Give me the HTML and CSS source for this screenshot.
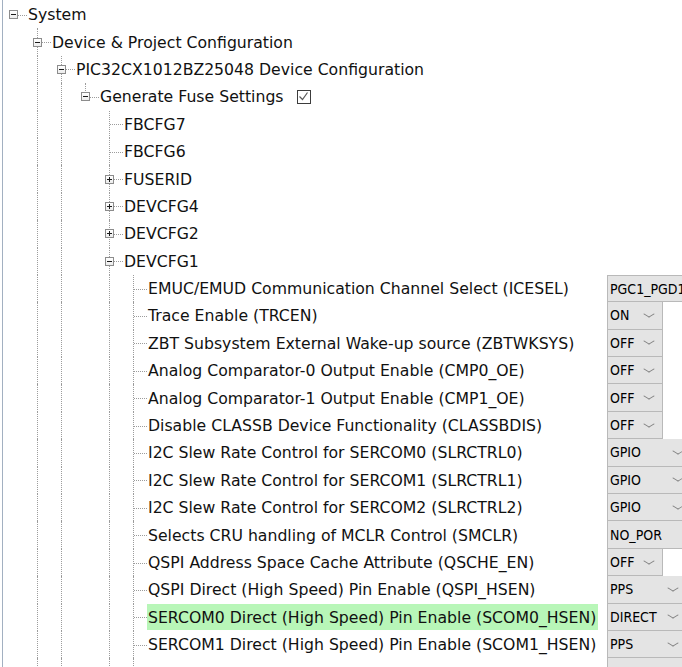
FILE: index.html
```html
<!DOCTYPE html>
<html>
<head>
<meta charset="utf-8">
<link rel="stylesheet" href="styles.css">
</head>
<body>
<div class="tree">
  <div class="row"><div class="node"><span class="cell r"><span class="exp minus"></span></span><span class="label">System</span></div><div class="val"></div></div>
  <div class="row"><div class="node"><span class="cell"></span><span class="cell t"><span class="exp minus"></span></span><span class="label">Device &amp; Project Configuration</span></div><div class="val"></div></div>
  <div class="row"><div class="node"><span class="cell"></span><span class="cell v"></span><span class="cell t"><span class="exp minus"></span></span><span class="label">PIC32CX1012BZ25048 Device Configuration</span></div><div class="val"></div></div>
  <div class="row"><div class="node"><span class="cell"></span><span class="cell v"></span><span class="cell v"></span><span class="cell l"><span class="exp minus"></span></span><span class="label">Generate Fuse Settings</span><span class="check"><svg width="11" height="11" viewBox="0 0 11 11"><polyline points="1.5,5.5 4.5,8.5 9.5,1.5" fill="none" stroke="#5a5a5a" stroke-width="1.2"/></svg></span></div><div class="val"></div></div>
  <div class="row"><div class="node"><span class="cell"></span><span class="cell v"></span><span class="cell v"></span><span class="cell"></span><span class="cell t"></span><span class="label">FBCFG7</span></div><div class="val"></div></div>
  <div class="row"><div class="node"><span class="cell"></span><span class="cell v"></span><span class="cell v"></span><span class="cell"></span><span class="cell t"></span><span class="label">FBCFG6</span></div><div class="val"></div></div>
  <div class="row"><div class="node"><span class="cell"></span><span class="cell v"></span><span class="cell v"></span><span class="cell"></span><span class="cell t"><span class="exp plus"></span></span><span class="label">FUSERID</span></div><div class="val"></div></div>
  <div class="row"><div class="node"><span class="cell"></span><span class="cell v"></span><span class="cell v"></span><span class="cell"></span><span class="cell t"><span class="exp plus"></span></span><span class="label">DEVCFG4</span></div><div class="val"></div></div>
  <div class="row"><div class="node"><span class="cell"></span><span class="cell v"></span><span class="cell v"></span><span class="cell"></span><span class="cell t"><span class="exp plus"></span></span><span class="label">DEVCFG2</span></div><div class="val"></div></div>
  <div class="row"><div class="node"><span class="cell"></span><span class="cell v"></span><span class="cell v"></span><span class="cell"></span><span class="cell t"><span class="exp minus"></span></span><span class="label">DEVCFG1</span></div><div class="val"></div></div>

  <div class="row"><div class="node"><span class="cell"></span><span class="cell v"></span><span class="cell v"></span><span class="cell"></span><span class="cell v"></span><span class="cell t"></span><span class="label">EMUC/EMUD Communication Channel Select (ICESEL)</span></div><div class="val"><span class="combo w-xl"><span class="ctext">PGC1_PGD1</span></span></div></div>
  <div class="row"><div class="node"><span class="cell"></span><span class="cell v"></span><span class="cell v"></span><span class="cell"></span><span class="cell v"></span><span class="cell t"></span><span class="label">Trace Enable (TRCEN)</span></div><div class="val"><span class="combo w-s"><span class="ctext">ON</span><span class="chev"></span></span></div></div>
  <div class="row"><div class="node"><span class="cell"></span><span class="cell v"></span><span class="cell v"></span><span class="cell"></span><span class="cell v"></span><span class="cell t"></span><span class="label">ZBT Subsystem External Wake-up source (ZBTWKSYS)</span></div><div class="val"><span class="combo w-s"><span class="ctext">OFF</span><span class="chev"></span></span></div></div>
  <div class="row"><div class="node"><span class="cell"></span><span class="cell v"></span><span class="cell v"></span><span class="cell"></span><span class="cell v"></span><span class="cell t"></span><span class="label">Analog Comparator-0 Output Enable (CMP0_OE)</span></div><div class="val"><span class="combo w-s"><span class="ctext">OFF</span><span class="chev"></span></span></div></div>
  <div class="row"><div class="node"><span class="cell"></span><span class="cell v"></span><span class="cell v"></span><span class="cell"></span><span class="cell v"></span><span class="cell t"></span><span class="label">Analog Comparator-1 Output Enable (CMP1_OE)</span></div><div class="val"><span class="combo w-s"><span class="ctext">OFF</span><span class="chev"></span></span></div></div>
  <div class="row"><div class="node"><span class="cell"></span><span class="cell v"></span><span class="cell v"></span><span class="cell"></span><span class="cell v"></span><span class="cell t"></span><span class="label">Disable CLASSB Device Functionality (CLASSBDIS)</span></div><div class="val"><span class="combo w-s"><span class="ctext">OFF</span><span class="chev"></span></span></div></div>
  <div class="row"><div class="node"><span class="cell"></span><span class="cell v"></span><span class="cell v"></span><span class="cell"></span><span class="cell v"></span><span class="cell t"></span><span class="label">I2C Slew Rate Control for SERCOM0 (SLRCTRL0)</span></div><div class="val"><span class="combo w-g"><span class="ctext">GPIO</span><span class="chev"></span></span></div></div>
  <div class="row"><div class="node"><span class="cell"></span><span class="cell v"></span><span class="cell v"></span><span class="cell"></span><span class="cell v"></span><span class="cell t"></span><span class="label">I2C Slew Rate Control for SERCOM1 (SLRCTRL1)</span></div><div class="val"><span class="combo w-g"><span class="ctext">GPIO</span><span class="chev"></span></span></div></div>
  <div class="row"><div class="node"><span class="cell"></span><span class="cell v"></span><span class="cell v"></span><span class="cell"></span><span class="cell v"></span><span class="cell t"></span><span class="label">I2C Slew Rate Control for SERCOM2 (SLRCTRL2)</span></div><div class="val"><span class="combo w-g"><span class="ctext">GPIO</span><span class="chev"></span></span></div></div>
  <div class="row"><div class="node"><span class="cell"></span><span class="cell v"></span><span class="cell v"></span><span class="cell"></span><span class="cell v"></span><span class="cell t"></span><span class="label">Selects CRU handling of MCLR Control (SMCLR)</span></div><div class="val"><span class="combo w-l"><span class="ctext">NO_POR</span><span class="chev"></span></span></div></div>
  <div class="row"><div class="node"><span class="cell"></span><span class="cell v"></span><span class="cell v"></span><span class="cell"></span><span class="cell v"></span><span class="cell t"></span><span class="label">QSPI Address Space Cache Attribute (QSCHE_EN)</span></div><div class="val"><span class="combo w-s"><span class="ctext">OFF</span><span class="chev"></span></span></div></div>
  <div class="row"><div class="node"><span class="cell"></span><span class="cell v"></span><span class="cell v"></span><span class="cell"></span><span class="cell v"></span><span class="cell t"></span><span class="label">QSPI Direct (High Speed) Pin Enable (QSPI_HSEN)</span></div><div class="val"><span class="combo w-m"><span class="ctext">PPS</span><span class="chev"></span></span></div></div>
  <div class="row"><div class="node"><span class="cell"></span><span class="cell v"></span><span class="cell v"></span><span class="cell"></span><span class="cell v"></span><span class="cell t"></span><span class="label hl">SERCOM0 Direct (High Speed) Pin Enable (SCOM0_HSEN)</span></div><div class="val"><span class="combo w-m"><span class="ctext">DIRECT</span><span class="chev"></span></span></div></div>
  <div class="row"><div class="node"><span class="cell"></span><span class="cell v"></span><span class="cell v"></span><span class="cell"></span><span class="cell v"></span><span class="cell t"></span><span class="label">SERCOM1 Direct (High Speed) Pin Enable (SCOM1_HSEN)</span></div><div class="val"><span class="combo w-m"><span class="ctext">PPS</span><span class="chev"></span></span></div></div>
  <div class="row"><div class="node"><span class="cell"></span><span class="cell v"></span><span class="cell v"></span><span class="cell"></span><span class="cell v"></span><span class="cell t"></span><span class="label"></span></div><div class="val"><span class="combo w-m"><span class="ctext"></span></span></div></div>
</div>
</body>
</html>
```

FILE: styles.css
```css
html, body {
  margin: 0;
  padding: 0;
  background: #ffffff;
  overflow: hidden;
  height: 100%;
}

.tree {
  margin-left: 2px;
  border-left: 1px solid #a2b0c1;
  height: 100%;
  padding-top: 1px;
  box-sizing: border-box;
  overflow: hidden;
  font-family: "DejaVu Sans", Verdana, sans-serif;
  font-size: 15.7px;
  color: #111111;
}

.row {
  display: grid;
  grid-template-columns: 604px 1fr;
  height: 27.4px;
}

.node {
  display: flex;
  align-items: center;
  height: 100%;
  white-space: nowrap;
}

.cell {
  position: relative;
  flex: 0 0 24px;
  width: 24px;
  height: 100%;
  display: flex;
  align-items: center;
}

.cell.v::before,
.cell.t::before,
.cell.l::before {
  content: "";
  position: absolute;
  left: 10px;
  top: 0;
  border-left: 1px dotted #9c9c9c;
}

.cell.v::before,
.cell.t::before {
  bottom: 0;
}

.cell.l::before {
  height: 50%;
}

.cell.t::after,
.cell.l::after,
.cell.r::after {
  content: "";
  position: absolute;
  left: 11px;
  right: 0;
  top: 50%;
  border-top: 1px dotted #9c9c9c;
}

.exp {
  position: relative;
  z-index: 1;
  width: 7px;
  height: 7px;
  margin-left: 6px;
  border: 1px solid #8c8c8c;
  background: linear-gradient(#ffffff, #ececec);
}

.exp::before {
  content: "";
  position: absolute;
  left: 1px;
  top: 3px;
  width: 5px;
  height: 1px;
  background: #1a1a1a;
}

.exp.plus::after {
  content: "";
  position: absolute;
  left: 3px;
  top: 1px;
  width: 1px;
  height: 5px;
  background: #1a1a1a;
}

.label {
  display: flex;
  align-items: center;
  height: 26px;
  padding: 0 2px 0 1px;
}

.label.hl {
  background: #b8f6b8;
}

.check {
  display: flex;
  align-items: center;
  justify-content: center;
  width: 12px;
  height: 12px;
  margin-left: 11px;
  border: 1px solid #3c3c3c;
  background: #ffffff;
}

.val {
  display: flex;
  overflow: hidden;
  height: 100%;
}

.combo {
  display: flex;
  align-items: center;
  justify-content: space-between;
  flex: 0 0 auto;
  box-sizing: border-box;
  height: 100%;
  border: 1px solid #b9b9b9;
  border-top-width: 0;
  background: #e4e4e4;
  padding: 0 9px 0 2px;
  font-family: "DejaVu Sans Condensed", Tahoma, sans-serif;
  font-size: 14px;
  color: #000000;
}

.row:nth-child(11) .combo {
  border-top-width: 1px;
}

.w-s { width: 56px; }
.w-m { width: 80px; }
.w-g { width: 85px; }
.w-l { width: 110px; }
.w-xl { width: 120px; }

.chev {
  width: 7px;
  height: 7px;
  border-right: 1px solid #7c7c7c;
  border-bottom: 1px solid #7c7c7c;
  transform: scaleY(0.6) rotate(45deg);
  margin-top: -3px;
}
```
